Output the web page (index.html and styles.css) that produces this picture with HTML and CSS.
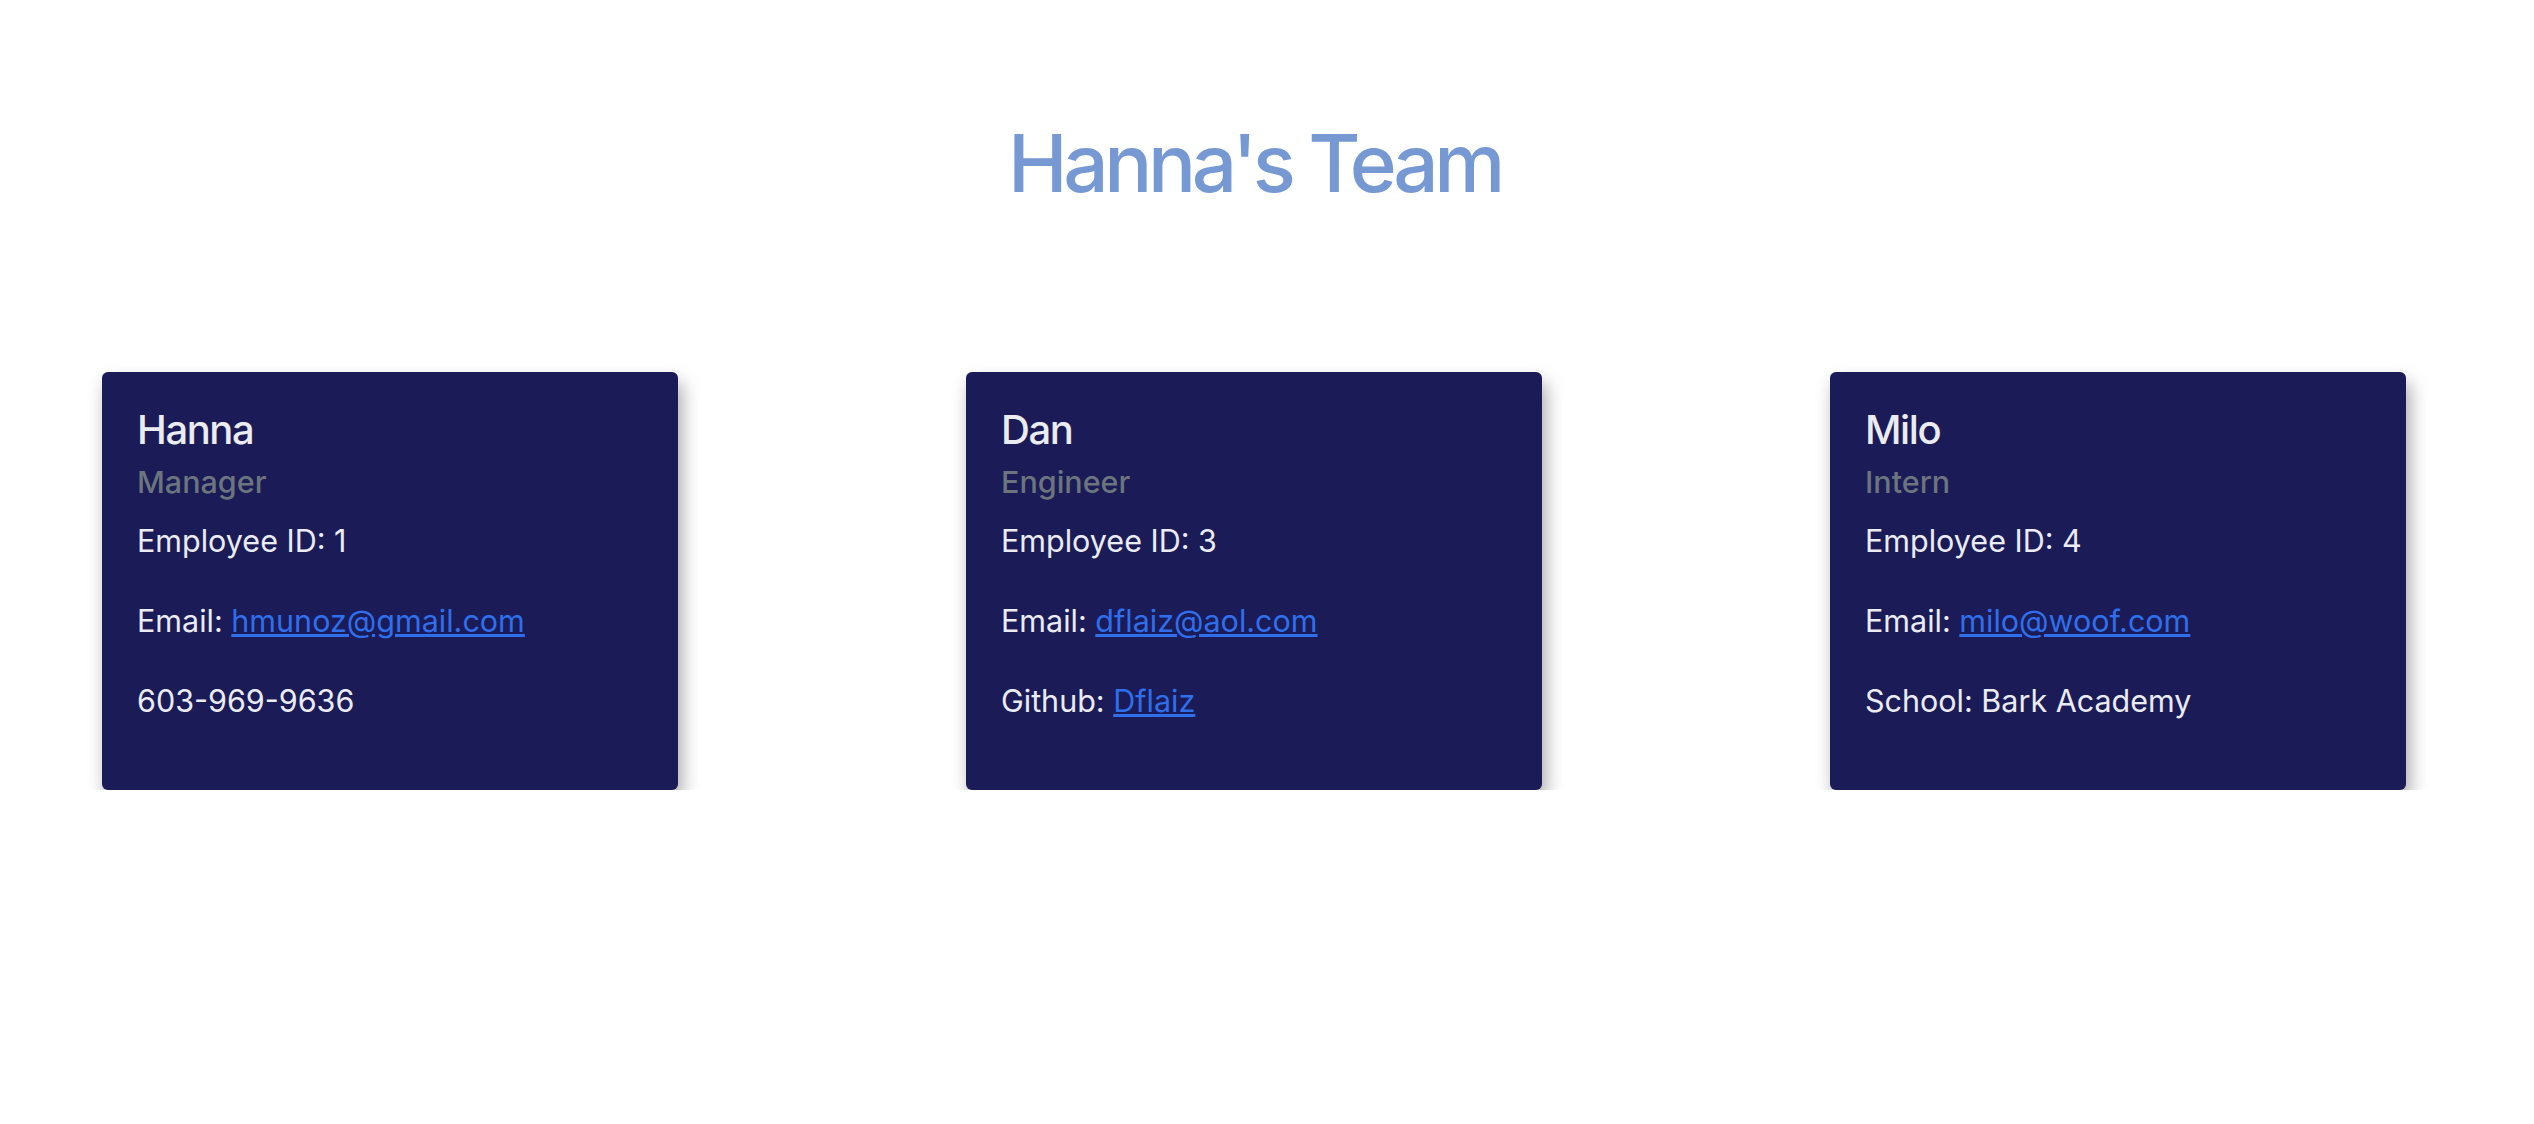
FILE: index.html
```html
<!DOCTYPE html>
<html lang="en">
<head>
<meta charset="utf-8">
<title>Hanna's Team</title>
<link rel="stylesheet" href="styles.css">
</head>
<body>
<div class="page">
  <header class="header">
    <h1 class="title">Hanna's Team</h1>
  </header>
  <main class="team">
    <div class="card">
      <h5 class="card-title">Hanna</h5>
      <h6 class="card-subtitle">Manager</h6>
      <p class="card-text">Employee ID: 1</p>
      <p class="card-text">Email: <a href="#">hmunoz@gmail.com</a></p>
      <p class="card-text">603-969-9636</p>
    </div>
    <div class="card">
      <h5 class="card-title">Dan</h5>
      <h6 class="card-subtitle">Engineer</h6>
      <p class="card-text">Employee ID: 3</p>
      <p class="card-text">Email: <a href="#">dflaiz@aol.com</a></p>
      <p class="card-text">Github: <a href="#">Dflaiz</a></p>
    </div>
    <div class="card">
      <h5 class="card-title">Milo</h5>
      <h6 class="card-subtitle">Intern</h6>
      <p class="card-text">Employee ID: 4</p>
      <p class="card-text">Email: <a href="#">milo@woof.com</a></p>
      <p class="card-text">School: Bark Academy</p>
    </div>
  </main>
</div>
</body>
</html>
```

FILE: styles.css
```css
html, body {
  margin: 0;
  padding: 0;
  background: #ffffff;
}

body {
  font-family: Inter, "Liberation Sans", Arial, sans-serif;
  color: #212529;
}

.page {
  padding-right: 25px;
}

.header {
  padding-top: 115px;
  text-align: center;
}

.title {
  margin: 0;
  font-size: 80px;
  line-height: 96px;
  font-weight: 500;
  letter-spacing: -4.4px;
  color: #7698d3;
}

.team {
  display: flex;
  justify-content: space-between;
  padding: 0 103px 0 102px;
  margin-top: 161px;
}

.card {
  width: 576px;
  box-sizing: border-box;
  padding: 34px 35px 33px;
  background: #1a1b57;
  border-radius: 6px;
  box-shadow: 4px 10px 18px rgba(0, 0, 0, 0.34);
  color: #ebebf2;
}

.card-title {
  margin: 0 0 10px;
  font-size: 40px;
  line-height: 48px;
  font-weight: 500;
  letter-spacing: -1.4px;
}

.card-subtitle {
  margin: 0 0 17px;
  font-size: 30.5px;
  line-height: 36px;
  font-weight: 500;
  color: #6c757d;
}

.card-text {
  margin: 0 0 32px;
  font-size: 30.5px;
  line-height: 48px;
}

.card-text a {
  color: #2f6fec;
  text-decoration: underline;
}
```
